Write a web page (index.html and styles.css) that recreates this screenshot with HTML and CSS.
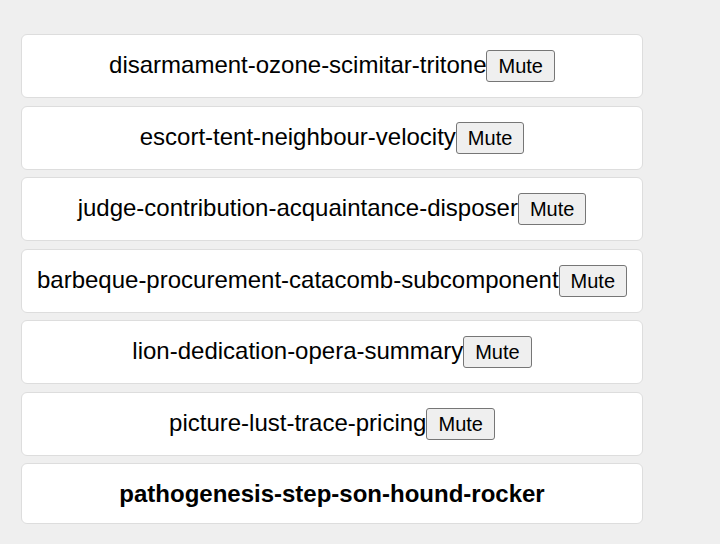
FILE: index.html
```html
<!DOCTYPE html>
<html lang="en">
<head>
    <meta charset="UTF-8">
    <meta name="viewport" content="width=device-width, initial-scale=1.0">
    <title>Channels</title>
    <link rel="stylesheet" href="styles.css">
</head>
<body>
    <div class="channel-list">
        <div class="channel">disarmament-ozone-scimitar-tritone<button class="mute-btn">Mute</button></div>
        <div class="channel">escort-tent-neighbour-velocity<button class="mute-btn">Mute</button></div>
        <div class="channel">judge-contribution-acquaintance-disposer<button class="mute-btn">Mute</button></div>
        <div class="channel">barbeque-procurement-catacomb-subcomponent<button class="mute-btn">Mute</button></div>
        <div class="channel">lion-dedication-opera-summary<button class="mute-btn">Mute</button></div>
        <div class="channel">picture-lust-trace-pricing<button class="mute-btn">Mute</button></div>
        <div class="channel current">pathogenesis-step-son-hound-rocker</div>
    </div>
</body>
</html>
```

FILE: styles.css
```css
body {
    font-family: "Liberation Sans", Arial, sans-serif;
    background-color: #efefef;
    color: #000;
    margin: 0;
    padding: 34px 0 0 21px;
}

.channel-list {
    width: 622px;
    display: flex;
    flex-direction: column;
    gap: 7.5px;
}

.channel {
    background-color: #fff;
    border: 1px solid #ddd;
    border-radius: 6px;
    padding: 15px 8px;
    text-align: center;
    font-size: 24px;
    white-space: nowrap;
}

.channel.current {
    font-weight: bold;
    padding-top: 16px;
}

.mute-btn {
    font-family: "Liberation Sans", Arial, sans-serif;
    font-size: 20px;
    padding: 4px 11px 3px;
    background-color: #efefef;
    border: 1px solid #767676;
    border-radius: 3px;
    color: #000;
}
```
